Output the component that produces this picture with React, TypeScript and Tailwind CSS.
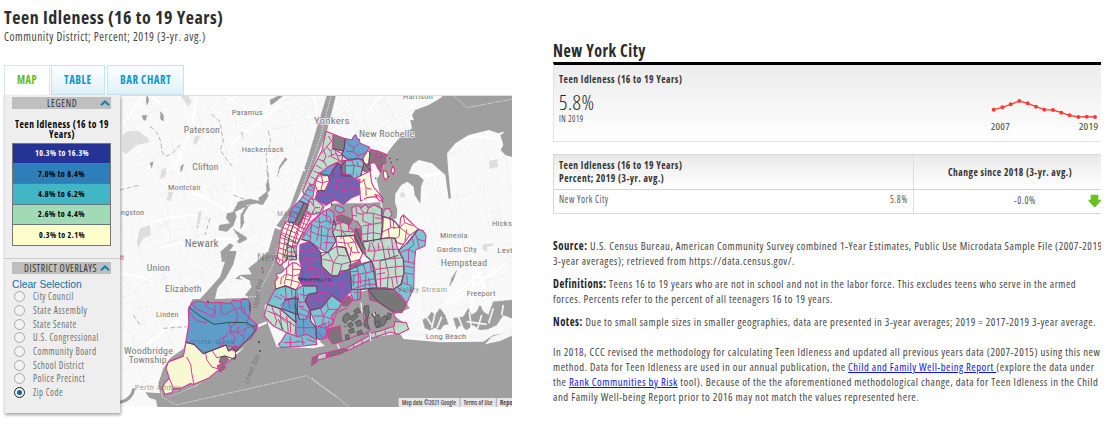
import React, { useLayoutEffect, useRef } from "react";

/* One line of text, condensed horizontally to the width of its box. */
function Fit({ className = "", children }: { className?: string; children: React.ReactNode }) {
  const box = useRef<HTMLSpanElement>(null);
  const inner = useRef<HTMLSpanElement>(null);
  useLayoutEffect(() => {
    if (!box.current || !inner.current) return;
    const k = box.current.clientWidth / inner.current.offsetWidth;
    inner.current.style.transform = `scaleX(${k})`;
  }, []);
  return (
    <span ref={box} className={"block shrink-0 whitespace-nowrap " + className}>
      <span ref={inner} className="inline-block origin-left">{children}</span>
    </span>
  );
}

const NAVY = "#5f5caf", BLUE = "#5a9dcb", TEAL = "#6cc5d1", GREEN = "#b5dfc5", YELLOW = "#ffffd6", GRAY = "#747474";

const districts: [string, string][] = [
  [GREEN, "198,16 220,25 218,68 250,85 245,105 225,112 205,122 198,135 178,142 165,165 150,200 135,210 128,196 150,145 172,100 185,75"],
  [GRAY, "220,25 256,38 250,75 218,68"],
  [BLUE, "256,38 276,42 280,32 287,26 292,38 298,40 300,52 329,64 322,75 320,90 308,102 296,98 270,104 262,100 245,85 252,70"],
  [YELLOW, "322,75 330,78 326,118 312,112 308,98"],
  [GRAY, "330,70 354,75 382,86 376,97 378,110 368,118 362,140 352,124 345,110 328,112"],
  [GRAY, "310,118 330,112 332,134 316,138 305,130"],
  [TEAL, "255,103 270,104 296,98 312,112 308,126 302,150 284,158 270,148 256,144"],
  [GRAY, "244,104 256,103 256,145 246,150 240,128"],
  [YELLOW, "316,142 330,135 335,170 342,185 355,200 370,218 362,222 345,212 320,215 302,225 298,180 300,160 285,158"],
  [NAVY, "235,110 245,125 246,150 256,144 272,150 285,160 298,165 300,205 275,215 250,235 225,222 198,238 165,220 172,195 195,193 205,175 210,150 218,130"],
  [BLUE, "178,142 205,122 235,110 218,130 210,150 185,147"],
  [YELLOW, "174,150 205,148 208,165 195,193 172,195 165,175"],
  [TEAL, "165,177 150,175 132,207 118,225 142,237 148,222 158,218"],
  [BLUE, "95,248 118,225 132,230 105,290 83,288"],
  [GRAY, "132,230 144,237 115,300 103,290"],
  [GREEN, "144,237 150,218 170,222 190,240 180,260 155,265 140,258"],
  [YELLOW, "83,285 75,290 62,325 57,362 48,405 60,418 78,405 82,390 106,388 107,366 122,335 128,318 153,270 140,258 115,300"],
  [GREEN, "82,365 108,358 110,400 82,402"],
  [YELLOW, "80,424 98,410 110,412 125,425 128,458 118,475 108,492 75,478 60,495 47,487 45,466 54,455 48,445 64,440"],
  [TEAL, "205,248 222,260 222,282 228,300 218,320 228,345 205,380 180,368 150,347 125,340 138,310 150,290 178,265"],
  [NAVY, "120,356 150,347 168,362 182,380 185,420 215,450 265,432 272,455 275,492 245,528 215,510 185,545 150,552 135,525 145,505 172,500 170,480 128,480 115,458 125,425 118,400"],
  [GREEN, "218,298 258,286 268,305 283,318 284,335 228,345 218,320"],
  [YELLOW, "228,332 284,328 308,382 300,400 272,408 258,365 230,362"],
  [GREEN, "185,390 230,360 255,365 272,408 270,432 240,436 234,450 213,448 185,420"],
  [TEAL, "228,238 250,245 253,256 238,262 224,250"],
  [GRAY, "228,272 245,266 276,280 270,296 253,291 244,285 232,286"],
  [GRAY, "286,308 300,310 303,345 317,372 318,390 303,372 283,338"],
  [GREEN, "275,245 292,238 304,245 318,235 325,247 342,236 365,248 367,300 362,345 340,350 305,342 304,305 292,287 278,282"],
  [GREEN, "373,250 388,247 396,265 388,276 368,272"],
  [YELLOW, "370,272 390,276 405,288 419,305 422,275 430,267 475,310 447,330 430,355 410,350 405,336 363,346 368,310"],
  [TEAL, "475,310 489,314 498,328 495,360 467,372 463,410 461,487 440,532 424,510 400,490 425,475 432,440 430,400 415,375 440,352"],
  [GREEN, "308,348 385,335 405,337 410,360 430,400 432,440 423,475 400,490 350,485 345,430 335,405 318,390"],
  [TEAL, "265,430 285,418 335,405 343,430 350,485 325,488 302,490 300,520 280,523 272,500 276,465"],
  [GRAY, "325,490 375,485 404,492 440,535 425,560 400,558 355,528 330,522"],
  [GRAY, "266,420 300,403 303,412 284,422"],
  [TEAL, "215,508 244,530 238,545 215,570 220,590 205,600 200,635 175,640 165,590 150,555 185,545"],
  [GRAY, "266,510 277,524 262,540 246,538 248,525"],
  [BLUE, "105,535 118,530 150,552 152,585 168,605 170,640 110,635 105,590"],
  [TEAL, "45,490 75,480 108,492 125,480 170,480 172,500 145,505 135,525 150,552 138,580 118,580 105,535 108,590 60,548 22,535"],
  [BLUE, "75,522 112,516 112,566 65,548"],
  [GREEN, "22,535 60,548 108,590 105,630 80,620 40,600 12,570"],
  [TEAL, "55,655 64,646 80,620 112,632 140,625 168,640 170,655 130,660 64,665"],
  [BLUE, "168,600 198,606 200,635 180,642 168,630"],
  [GRAY, "205,610 240,600 245,646 218,654 205,635"],
  [GRAY, "157,695 173,688 170,708 155,718"],
  [GREEN, "175,686 200,680 198,696 170,703"],
  [GRAY, "204,680 252,667 263,673 240,684 200,694"],
  [GREEN, "262,665 330,628 332,640 290,661 262,674"],
  [GREEN, "330,622 360,615 403,600 404,586 439,590 446,610 415,625 392,618 334,637"],
];

const zipLines = [
  "205,30 215,45 200,62 210,75", "200,62 185,82", "190,70 198,92 188,110", "213,70 215,92 240,105", "175,100 192,105 200,122", "168,118 186,128", "160,135 178,142", "152,152 168,160", "145,170 158,180", "205,92 230,82", "225,75 238,104",
  "262,52 282,66 297,53", "282,66 280,78 294,88 292,98", "258,75 280,78", "294,88 320,80", "262,100 250,90 232,88",
  "275,104 282,118 279,148", "256,120 282,118 307,124", "290,106 296,122",
  "215,140 228,162 245,165 270,158", "210,180 228,162 230,188 250,195 275,190 298,185", "230,188 218,205 225,222", "250,195 255,220", "275,190 280,205", "195,193 205,215 198,238", "210,150 225,142 240,145", "172,205 200,208", "250,165 256,192", "225,115 228,140", "265,160 270,180 300,190",
  "185,150 188,170 207,165", "188,170 183,192", "170,165 186,170", "310,160 318,185 335,190", "318,185 318,210", "300,170 316,160",
  "340,80 352,96 376,90", "350,80 348,96 338,102", "352,96 366,110 360,128", "345,100 362,104", "365,85 362,100",
  "126,212 150,228", "135,205 156,214", "143,190 162,196", "150,178 163,190", "105,240 128,250", "96,255 118,265", "90,270 112,278", "150,225 165,245 180,245", "165,245 155,265", "160,220 160,240",
  "75,292 112,308", "70,305 118,326", "65,320 116,340", "62,334 110,353", "60,350 106,366", "56,365 84,375", "54,380 82,390", "50,395 72,406", "90,288 76,330 70,372 68,410", "101,293 88,332 82,368", "117,298 101,340 96,366", "129,278 113,318 104,355", "140,262 125,312", "120,288 145,298", "115,300 140,312", "110,311 135,322", "128,276 151,282", "134,268 153,275", "82,378 108,378", "94,365 96,402", "82,390 110,392", "87,405 84,424", "52,388 60,410",
  "64,455 80,444 98,450 125,444", "80,424 80,444 72,475", "98,412 98,450 92,482", "64,455 62,475", "98,430 126,430", "78,460 92,462 118,470",
  "150,292 170,305 188,300 205,310 220,305", "160,282 180,290 200,285 222,290", "175,268 180,290 170,345", "200,250 200,285", "205,310 198,370", "150,315 170,325 195,330 225,332", "155,295 150,345", "185,300 184,330 182,368", "140,325 155,335", "190,350 220,350", "187,265 210,272", "212,275 210,295",
  "120,375 145,370 170,378", "118,395 150,398 184,400", "145,370 150,398 145,425 180,430", "125,425 145,425 148,450 190,455 215,450", "148,450 150,480", "170,435 165,480", "185,420 190,455 195,480 215,478 245,470 270,460", "195,480 185,510", "215,478 216,510", "172,500 200,500 215,510", "245,470 250,500 240,525", "235,450 245,470", "120,470 175,468 205,455", "160,350 155,372", "165,372 168,395", "120,410 148,412", "160,400 158,430", "215,450 210,480", "145,515 180,525 210,512", "175,500 172,545", "155,520 152,550", "192,525 196,540",
  "240,292 245,315 280,318", "222,310 245,315 243,340", "265,290 266,318", "245,315 258,326", "250,332 256,362", "232,348 262,352 290,346", "270,330 285,350 295,380", "262,352 278,380 300,380", "275,362 270,390",
  "205,380 220,410 215,448", "220,410 245,415 270,408", "230,362 235,388 220,410", "235,388 260,390", "245,415 240,436", "190,400 215,405",
  "300,245 310,260 340,262 365,270", "310,260 308,285 335,295 365,290", "340,262 340,350", "308,300 335,295", "305,325 340,320 364,325", "288,240 290,262 310,265", "278,268 292,270", "325,247 320,265", "325,295 322,345", "345,275 362,278",
  "390,276 392,305 368,318", "392,305 420,305 450,328", "419,305 418,330 407,338", "385,308 388,335", "430,268 434,290 460,300", "434,290 420,305", "400,285 402,310", "440,310 435,345",
  "465,320 472,340 495,345", "455,330 462,356 445,370", "472,340 478,368", "420,380 445,370 465,380", "430,405 462,412", "432,440 460,445", "445,370 446,410", "428,470 455,480 450,500", "440,445 442,475", "412,485 440,500", "435,420 460,425",
  "335,350 345,375 340,405", "365,345 370,370 375,400 385,440 382,487", "320,375 345,375 370,370 415,370", "340,405 375,400 425,395", "348,430 385,425 430,420", "352,460 385,455 428,450", "395,338 398,368 405,398 408,430", "355,350 355,370", "384,370 390,395", "360,405 362,485", "405,430 412,475", "330,350 325,375", "350,445 375,440", "395,455 400,485",
  "272,450 345,435", "280,470 348,458", "290,420 296,445 292,520", "310,415 318,440 315,488", "276,490 320,475 348,475", "330,408 334,435", "300,448 302,475", "270,438 296,435", "282,448 280,480", "280,500 300,498", "326,455 330,485",
  "180,545 190,570 215,580", "160,570 190,570 188,600", "200,525 205,550 235,550", "190,570 205,550", "175,600 200,590", "195,590 200,605 208,598 206,585",
  "60,505 80,520 112,510", "75,480 80,520 60,540", "112,500 118,530 150,525", "130,485 132,520", "45,510 66,520", "95,490 96,512", "120,545 150,560", "120,505 145,510", "108,560 150,575", "110,605 165,605", "130,575 132,625", "84,521 90,548", "110,540 132,542",
  "35,540 50,585 45,600", "22,555 60,570 105,600", "60,548 65,610", "80,570 85,620", "45,560 80,590", "90,585 92,620", "90,632 92,662", "125,632 130,658", "72,650 115,648", "140,640 166,648", "110,645 135,650",
  "280,655 282,666", "305,642 307,654", "345,620 350,635", "375,613 378,628", "400,602 405,624", "328,628 330,640",
];

const darkLines = [
  "256,38 252,70 245,85 262,100 296,98 308,102", "308,98 312,112 302,150", "308,102 318,118 332,134", "218,68 250,75", "210,150 235,110 245,125 246,150 272,150", "178,142 205,148 210,165", "172,195 195,193", "240,128 256,103", "132,230 144,237 115,300", "103,290 83,288", "118,225 132,230 105,290",
  "218,298 222,282 228,300 218,320 228,345 205,380 182,380 150,347 125,340", "230,362 255,365 272,408 270,432", "228,332 284,328 308,382", "286,308 303,345 317,372", "308,348 385,335 405,337 410,350", "365,270 405,285 420,305", "182,380 185,420 215,450 234,450 240,436 265,432 335,405", "318,390 335,405 350,485", "270,432 275,492 302,490 325,488 400,490", "430,355 415,375 430,400 432,440 423,475 400,490", "440,355 475,310", "128,480 170,480 172,500 145,505 135,525 150,552 185,545 215,508 245,530", "105,535 108,590 60,548 22,535", "45,490 75,480 108,492 105,535 118,580", "150,552 152,585 168,605 170,640", "78,405 82,390 110,392", "101,293 88,332 72,395", "63,325 112,352 125,325", "330,78 326,118", "115,458 145,462 168,458 185,464", "340,485 325,490 355,528 400,558", "72,522 112,516 112,566 65,548", "360,405 415,388", "55,580 70,612", "75,350 100,365 110,398", "365,248 367,300 362,345",
];

const siDistricts: [string, string][] = [
  [BLUE, "205,178 215,155 235,150 260,156 302,154 330,158 340,147 362,150 370,143 387,147 391,175 388,200 412,222 408,238 392,262 350,292 318,282 250,308 222,280 198,274 207,215"],
  [YELLOW, "198,274 222,280 250,308 318,282 326,300 347,290 346,318 330,328 268,380 222,400 210,398 183,412 160,412 156,425 134,430 127,410 135,395 148,382 138,352 145,333 190,316"],
  [GRAY, "302,318 315,315 326,326 312,340 298,334"],
  [GRAY, "345,284 357,290 348,302 338,297"],
  [GRAY, "401,224 412,224 410,236 401,239"],
  [GRAY, "292,345 308,336 316,350 300,363"],
];
const siLines = [
  "215,155 230,175 255,185 280,198", "255,157 262,170 282,178 282,198", "302,154 304,188 318,190 345,172 335,158", "285,162 286,190", "362,150 365,180 388,200 376,190", "345,172 352,190 350,215 335,225 330,240 345,260 340,280", "328,215 332,240 312,260 306,286", "356,225 350,245 372,256 368,275", "300,288 298,265 320,255", "388,200 380,212 384,225", "330,240 352,245 370,235",
  "200,318 212,340 215,365 222,400", "256,300 260,325 275,348 300,355", "276,298 290,320 300,318", "148,382 160,412", "140,340 150,330 188,316", "400,225 376,232 372,250", "210,165 205,178 230,210 260,215", "350,172 372,170 376,190",
];

const water = [
  // Hudson
  "648,0 621,0 590,100 560,200 510,335 465,398 442,480 450,520 480,500 490,395 530,318 575,225 620,112",
  // Long Island Sound and East River
  "1176,0 971,0 961,10 926,30 886,45 876,60 882,76 871,75 876,100 846,120 820,150 803,172 795,205 770,255 786,320 740,325 640,325 612,358 618,400 690,470 760,400 830,370 832,345 825,322 826,296 844,270 862,260 881,275 884,300 901,326 903,275 911,255 895,240 866,235 878,208 896,195 936,205 976,240 986,312 993,310 984,220 981,175 1006,145 1046,120 1106,105 1136,115 1148,110 1160,118 1176,110",
  // Newark Bay and the Kills
  "322,468 350,468 340,508 318,548 292,580 285,612 388,608 400,635 420,640 422,690 380,752 320,790 290,840 220,875 150,905 120,895 115,865 130,820 150,790 192,760 205,690 205,640 218,612 240,612 262,588 300,545 315,500",
  // Upper bay
  "442,470 478,480 485,500 500,540 470,610 435,630 430,680 425,700 380,695 385,606 375,600 395,575 386,555 345,552 360,540 395,538 385,520 410,500",
  // Lower bay and ocean
  "76,892 125,895 150,905 230,872 300,825 370,760 415,700 435,640 445,690 470,755 580,760 700,735 840,715 850,732 960,742 1090,740 1120,720 1176,712 1176,937 112,937 108,915 88,908",
  // Jamaica Bay
  "630,660 690,600 760,580 840,600 870,640 820,660 860,690 740,740 640,775 600,740",
  "1141,120 1155,112 1176,110 1176,186 1156,180 1142,165 1150,150",
  "321,355 345,350 350,365 340,392 320,410 295,406 298,390 330,385 318,370",
  "8,120 25,108 55,108 84,130 88,142 50,150 18,178 8,170",
];

const marsh = [
  "90,205 100,200 95,220", "338,353 355,320 390,312 420,318 415,310 440,290 445,303 428,330 410,325 380,330 362,360 362,402 372,385 370,360 388,330",
  "66,62 80,60 78,76 70,74", "121,50 130,60 131,77 122,74", "450,15 470,5 480,0 492,0 465,22 452,30", "478,215 495,188 502,192 480,220 472,245", "440,225 446,245 438,270 441,295 450,285", "182,216 190,206 189,218 182,232", "78,8 84,3 86,20 80,30", "302,470 330,445 340,452 320,478 316,500 306,500", "340,402 376,425 382,432 358,445 352,440 358,430",
  "908,675 925,665 935,650 945,660 960,640 975,660 985,688 972,690 960,705 945,698 930,706 915,700", "1000,670 1030,665 1045,640 1055,660 1070,650 1080,630 1090,650 1105,660 1120,620 1176,615 1176,670 1150,660 1130,690 1105,702 1080,705 1060,690 1040,705 1020,690 1010,702",
  "995,550 1010,526 1000,555 988,575", "1090,670 1105,665 1115,685 1100,700",
];

const islands = [
  "250,570 262,560 275,572 285,562 295,570 280,585 268,578 256,592 248,585", "262,595 275,588 280,598 270,606", "265,612 280,606 283,618 270,622", "280,555 295,545 302,560 290,562", "285,588 300,582 305,598 292,602", "256,628 266,625 268,640 258,642", "290,618 304,612 308,622 296,628",
  "344,570 356,565 360,580 375,568 384,575 372,598 350,605 344,590", "312,540 325,538 328,560 322,580 326,610 312,600 318,575", "335,565 345,558 348,565 338,572", "384,560 394,566 392,578 380,582", "344,588 358,586 360,602 348,604",
];

function makeRoads() {
  let s = 91;
  const r = () => ((s = (s * 16807) % 2147483647) / 2147483647);
  const minor: string[] = [], major: string[] = [];
  for (let i = 0; i < 620; i++) {
    const x = r() * 1176, y = r() * 936, a = (r() > 0.5 ? 1.15 : -0.4) + (r() - 0.5) * 0.5, l = 25 + r() * 60;
    minor.push(`M${x.toFixed(0)} ${y.toFixed(0)}l${(Math.cos(a) * l).toFixed(0)} ${(Math.sin(a) * l).toFixed(0)}`);
  }
  for (let i = 0; i < 44; i++) {
    const x = r() * 1176, y = r() * 936, a = r() * 6.28, l = 120 + r() * 160;
    const dx = Math.cos(a) * l, dy = Math.sin(a) * l;
    major.push(`M${x.toFixed(0)} ${y.toFixed(0)}q${(dx / 2 + 25).toFixed(0)} ${(dy / 2 - 20).toFixed(0)} ${dx.toFixed(0)} ${dy.toFixed(0)}`);
  }
  return [minor.join(""), major.join("")];
}
const [minorRoads, majorRoads] = makeRoads();

const towns: [string, number, number, number, number][] = [
  ["Paramus", 335, 59, 24, 94], ["Paterson", 191, 115, 27, 109], ["Hackensack", 365, 172, 24, 127], ["Clifton", 217, 224, 27, 79],
  ["Montclair", 144, 284, 24, 99], ["ngston", 2, 360, 24, 71], ["Newark", 194, 456, 30, 102], ["Yonkers", 582, 87, 29, 107],
  ["New Rochelle", 717, 125, 27, 166], ["Harrison", 849, 11, 22, 90], ["Hicks", 1116, 392, 23, 60], ["Mineola", 960, 429, 23, 83],
  ["Garden City", 950, 472, 24, 121], ["Levi", 1132, 474, 24, 46], ["Hempstead", 962, 513, 27, 140],
  ["Freeport", 1040, 602, 24, 87], ["Long Beach", 917, 733, 24, 122], ["Union", 80, 528, 27, 70], ["Elizabeth", 135, 592, 27, 110],
  ["Linden", 108, 667, 24, 68], ["Woodbridge", 12, 777, 27, 147], ["Township", 26, 804, 27, 114],
  ["it", 0, 494, 22, 12],
];
/* Labels that run on under the translucent districts. */
const coveredTowns: [string, number, number, number, number][] = [
  ["Valley Stream", 832, 590, 24, 150], ["Perth Amboy", 44, 886, 23, 140], ["MANHATTAN", 471, 364, 19, 130], ["New York", 411, 497, 30, 142],
];

function CityMap() {
  return (
    <svg className="block h-[312px] w-[392px]" viewBox="0 0 1176 936" preserveAspectRatio="none">
      <rect width="1176" height="936" fill="#f9f9f9" />
      <path d={minorRoads} stroke="#f2f2f2" strokeWidth="3" fill="none" />
      <path d={majorRoads} stroke="#fff" strokeWidth="6" fill="none" />
      <path d="M90 95Q120 110 125 160T180 150M275 58L300 80 310 140 300 165 325 200 338 215M445 108L452 140 438 180 445 240M240 350L232 400M270 370L255 420M340 300L390 320M0 285L60 270M40 660L60 690M130 700L200 695" stroke="#b5b5b5" strokeWidth="3" strokeDasharray="14 7" fill="none" />
      <g fill="#dedede">
        <path d="M222 125L240 122 232 145 220 150ZM125 225L140 215 135 245 120 252ZM145 290L160 292 152 318 140 315ZM60 400L90 390 92 420 70 430 55 458 50 440ZM1108 198L1132 192 1134 215 1108 222ZM840 294L852 292 856 305 842 308ZM1088 448L1120 445 1120 452 1100 455 1103 470 1088 465ZM180 0L205 2 215 20 205 35ZM235 352L245 345 240 385 230 390ZM360 110L372 112 368 135Z" />
      </g>
      <g fill="#9f9f9f">
        {water.slice(0, 8).map((p, i) => <polygon key={i} points={p} />)}
        {marsh.map((p, i) => <polygon key={i} points={p} stroke="#9f9f9f" strokeWidth="1.5" strokeDasharray="9 5" />)}
      </g>
      <polygon points={water[8]} fill="#dedede" />
      <path d="M915 660l20 30M945 655l-10 45M965 665l-14 35M1015 665l15 38M1048 650l6 48M1085 660l-12 40M1120 640l-14 45M1150 630l-5 30M1040 680l60 8" stroke="#f5f5f5" strokeWidth="5" />
      <path d="M840 720L850 708 950 716 1095 718 1085 731 960 730Z M1095 748L1115 725 1176 705 1176 722 1140 738Z" fill="#f5f5f5" />
      <path d="M262 525L290 545M345 560L388 578M290 515L300 530M360 545L390 562M410 695L440 682M570 322L545 350M555 226L545 222M465 395L482 402" stroke="#f8f8f8" strokeWidth="7" />
      <path d="M0 922Q35 915 42 880" stroke="#9f9f9f" strokeWidth="9" fill="none" />
      <path d="M634 0L600 130 520 350 480 440 455 520 408 605H365M125 890V905L168 930 560 842 650 905 690 940M1000 0L1042 38 1176 12M576 850L652 908" stroke="#e9e9e9" strokeWidth="3" strokeDasharray="4 4" fill="none" />
      <g fill="#777" fontFamily="Roboto, sans-serif">
        <text x="412" y="640" fontSize="21" fill="#7c7c7c" transform="rotate(-80 412 640)">Upper Bay</text>
        <text x="384" y="868" fontSize="22" fill="#808080" transform="rotate(-68 384 868)">Lower Bay</text>
        {towns.map(([t, x, y, s, w]) => (
          <text key={t} x={x} y={y} fontSize={s} textLength={w} lengthAdjust="spacingAndGlyphs" stroke="#fafafa" strokeWidth="4" paintOrder="stroke">{t}</text>
        ))}
      </g>
      <g fillOpacity="0.93">
        <g transform="translate(420 93)" strokeLinejoin="round">
          <g stroke="#d83a98" strokeWidth="3.4">
            {districts.map(([c, p], i) => <polygon key={i} points={p} fill={c} />)}
            <path d="M398 120l6 10-4 16-7-10zM370 134l10 2 4 18-8 8-6-12zM345 205l14 6 10 16-12-4z" fill={YELLOW} />
          </g>
          <g fill="none" stroke="#d83a98" strokeWidth="3">
            {zipLines.map((p, i) => <polyline key={i} points={p} />)}
            <path d="M126 328L150 296 185 262 193 240M130 334L155 300M300 560L310 545 312 585 330 575M306 590L325 598 332 612 318 620M338 560L350 600 380 590M180 605q10-15 18 0t8 20l-20 10-10-18M345 490L350 478M300 520L303 490M390 565L400 560 408 580M225 625L215 600 230 560 262 545M245 646L300 625 330 622" />
            <path d="M5 425l4 4M8 437l4 3" strokeWidth="6" />
          </g>
          <g fill="none" stroke="#35504d" strokeWidth="2.5">
            {darkLines.map((p, i) => <polyline key={i} points={p} />)}
          </g>
          <g fill="#737373" stroke="#4a4a4a" strokeWidth="2">
            {islands.map((p, i) => <polygon key={i} points={p} />)}
            <path d="M388 96l3 3M392 108l3 3M346 155l3 3M385 150l2 3M214 232l3 8M410 100l3 2M255 600l2 3" strokeWidth="4" />
          </g>
          <path d="M303 530L306 560M330 620L332 645M232 655L238 668M362 228L366 245M307 214L315 232M345 570L340 560" stroke="#eee" strokeWidth="4" />
          <g fontFamily="Roboto, sans-serif" fontSize="18" fillOpacity="0.35" fill="#1e3a5f">
            <text x="216" y="152" textLength="80">BRONX</text>
            <text x="325" y="373" textLength="80">QUEENS</text>
            <text x="120" y="467" textLength="95" fillOpacity="0.7" fill="#23246e">BROOKLYN</text>
          </g>
        </g>
        <g transform="translate(0 468)" strokeLinejoin="round">
          <g stroke="#d83a98" strokeWidth="3.4">
            {siDistricts.map(([c, p], i) => <polygon key={i} points={p} fill={c} />)}
          </g>
          <g fill="none" stroke="#d83a98" strokeWidth="3">
            {siLines.map((p, i) => <polyline key={i} points={p} />)}
          </g>
          <path d="M205 168L240 195 282 220 332 214 380 215 401 228M198 274L222 280 250 308 318 282 326 300 338 290 348 302 385 262 408 238M302 318L315 315 345 325 348 310M390 155V180" fill="none" stroke="#35504d" strokeWidth="3" />
          <path d="M417 270v6M420 297v5M262 150l4 4" stroke="#333" strokeWidth="4" />
          <text x="212" y="279" fontSize="17" textLength="130" fontFamily="Roboto, sans-serif" fill="#2a5d88" fillOpacity="0.6">STATEN ISLAND</text>
        </g>
      </g>
      <g fill="#666" fillOpacity="0.6" fontFamily="Roboto, sans-serif">
        {coveredTowns.map(([t, x, y, s, w]) => (
          <text key={t} x={x} y={y} fontSize={s} textLength={w} lengthAdjust="spacingAndGlyphs">{t}</text>
        ))}
      </g>
      <g fontFamily="'Open Sans', sans-serif" fontSize="19" fill="#333" stroke="#333" strokeWidth="0.3">
        <rect x="836" y="909" width="340" height="27" fill="#e6e6e6" stroke="none" />
        <path d="M1020 909V936M1129 909V936" stroke="#aaa" strokeWidth="3" />
        <text x="846" y="929" textLength="162" lengthAdjust="spacingAndGlyphs">Map data ©2021 Google</text>
        <text x="1031" y="929" textLength="87" lengthAdjust="spacingAndGlyphs">Terms of Use</text>
        <text x="1140" y="929" textLength="38" lengthAdjust="spacingAndGlyphs" fontWeight="600">Repo</text>
      </g>
      <path d="M0 1.5H1176" stroke="#dedede" strokeWidth="3" />
    </svg>
  );
}

function Caret() {
  return (
    <svg className="h-[6px] w-[10px]" viewBox="0 0 10 6"><path d="M1 5.2L5 1.4 9 5.2" stroke="#1783b0" strokeWidth="2.1" fill="none" /></svg>
  );
}

const legend = [
  { label: "10.3% to 16.3%", row: "bg-[#253494] text-white", w: "w-[54px]" },
  { label: "7.0% to 8.4%", row: "bg-[#2c7fb8] text-black", w: "w-[47px]" },
  { label: "4.8% to 6.2%", row: "bg-[#41b6c4] text-black", w: "w-[47px]" },
  { label: "2.6% to 4.4%", row: "bg-[#a1dab4] text-black", w: "w-[47px]" },
  { label: "0.3% to 2.1%", row: "bg-[#ffffcc] text-black", w: "w-[46px]" },
];

const overlays = [
  { label: "City Council", w: "w-[41px]" },
  { label: "State Assembly", w: "w-[54px]" },
  { label: "State Senate", w: "w-[44px]" },
  { label: "U.S. Congressional", w: "w-[66px]" },
  { label: "Community Board", w: "w-[64px]" },
  { label: "School District", w: "w-[51px]" },
  { label: "Police Precinct", w: "w-[52px]" },
  { label: "Zip Code", w: "w-[30px]", on: true },
];

function Sidebar() {
  return (
    <aside className="z-10 h-[318px] w-[116px] shrink-0 border-l border-[#ddd] bg-[#eee] shadow-[1px_2px_3px_rgba(0,0,0,0.35)]">
      <div className="h-[164px] border-b border-[#ccc] pl-[7px] pt-[2px]">
        <div className="flex h-3 w-[99px] items-center justify-between bg-[#bfbfbf] pl-[35px] pr-[1px] text-[10px] text-[#333]">
          <Fit className="w-[30px]">LEGEND</Fit>
          <Caret />
        </div>
        <div className="flex w-[99px] flex-col items-center pt-[10px] text-[11px] font-bold leading-[10px] text-black">
          <Fit className="h-[10px] w-[94px]">Teen Idleness (16 to 19</Fit>
          <Fit className="h-[10px] w-[26px]">Years)</Fit>
        </div>
        <div className="mt-[4px] w-[99px] border border-[#777]">
          {legend.map((l, i) => (
            <div key={l.label} className={"flex items-center justify-center text-[9.5px] font-bold " + (i < 4 ? "h-[20.2px] border-b border-[#66777a] " : "h-[20px] ") + l.row}>
              <Fit className={l.w}>{l.label}</Fit>
            </div>
          ))}
        </div>
      </div>
      <div className="pl-[7px] pt-[3px]">
        <div className="flex h-3 w-[99px] items-center justify-between bg-[#bfbfbf] pl-[12px] pr-[1px] text-[10px] text-[#333]">
          <Fit className="w-[73px]">DISTRICT OVERLAYS</Fit>
          <Caret />
        </div>
        <div className="mt-[4px] h-[12px] font-['Liberation_Sans',sans-serif] text-[11px] leading-[13px] tracking-normal text-[#0d72ac]">
          <Fit className="w-[70px] [font-stretch:normal]">Clear Selection</Fit>
        </div>
        {overlays.map((o) => (
          <div key={o.label} className="flex h-[13.7px] items-center gap-[8px] pl-[2px] text-[10px] text-[#707070]">
            <span className={"flex size-[11px] items-center justify-center rounded-full border bg-[#f3f3f3] " + (o.on ? "border-[1.5px] border-[#222]" : "border-[#a8a8a8]")}>
              {o.on && <span className="size-[5px] rounded-full bg-[#0b6a94]" />}
            </span>
            <Fit className={o.w}>{o.label}</Fit>
          </div>
        ))}
      </div>
    </aside>
  );
}

const trend = [[506, 224], [532, 217], [557, 208], [583, 198], [608, 205], [633, 215], [658, 224], [684, 225], [709, 233], [734, 241], [760, 246], [785, 245], [810, 246]];

function Trend() {
  return (
    <svg className="block h-[42px] w-[114px]" viewBox="486 180 342 126">
      <polyline points={trend.map((p) => p.join(",")).join(" ")} fill="none" stroke="#ff4238" strokeWidth="4" />
      {trend.map(([x, y]) => <circle key={x} cx={x} cy={y} r="6" fill="#fb3a30" />)}
      <g fontFamily="'Open Sans', sans-serif" fontSize="26" fill="#444">
        <text x="497" y="286" textLength="58" lengthAdjust="spacingAndGlyphs">2007</text>
        <text x="761" y="286" textLength="59" lengthAdjust="spacingAndGlyphs">2019</text>
      </g>
    </svg>
  );
}

function Report() {
  return (
    <main className="w-[548px] overflow-hidden pt-[41px] text-[#444]">
      <div className="h-[21px] text-[17px] font-bold leading-[20px] text-[#2b2b2b]"><Fit className="w-[93px]">New York City</Fit></div>
      <section className="flex h-[80px] justify-between border-b border-l border-t-[3px] border-b-[#e2e2e2] border-l-[#e2e2e2] border-t-black bg-linear-to-b from-[#ececec] to-white">
        <div className="pl-[5px] pt-[7px]">
          <div className="h-[14px] text-[11px] font-bold leading-[14px] text-[#333]"><Fit className="w-[123px]">Teen Idleness (16 to 19 Years)</Fit></div>
          <div className="mt-[5px] h-[23px] text-[20px] font-light leading-[24px] text-[#222]"><Fit className="w-[36px]">5.8%</Fit></div>
          <div className="h-[10px] text-[8.5px] leading-[10px]"><Fit className="w-[25px]">IN 2019</Fit></div>
        </div>
        <div className="pt-[30px]"><Trend /></div>
      </section>
      <section className="mt-[12px] border-y border-l border-[#d9d9d9]">
        <div className="flex h-[35px] border-b border-[#d5d5d5] bg-linear-to-b from-[#e9e9e9] to-white text-[11px] font-bold leading-[13px] text-[#333]">
          <div className="w-[360px] border-r border-[#ddd] pl-[5px] pt-[3px]">
            <Fit className="w-[123px]">Teen Idleness (16 to 19 Years)</Fit>
            <Fit className="w-[105px]">Percent; 2019 (3-yr. avg.)</Fit>
          </div>
          <div className="flex flex-1 items-center pb-[2px] pl-[34px]"><Fit className="w-[124px]">Change since 2018 (3-yr. avg.)</Fit></div>
        </div>
        <div className="flex h-[23px] text-[10px] leading-[13px] text-[#555]">
          <div className="flex w-[360px] justify-between border-r border-[#ddd] pl-[5px] pr-[5px] pt-[3px]">
            <Fit className="w-[50px]">New York City</Fit>
            <Fit className="w-[18px]">5.8%</Fit>
          </div>
          <div className="flex flex-1 items-center justify-between pb-[2px] pl-[100px]">
            <Fit className="w-[22px]">-0.0%</Fit>
            <svg className="h-[14px] w-[13px]" viewBox="0 0 39 42"><path d="M10 2H29Q31 2 31 4V17H38Q40 19 38 22L22 39Q20 41 18 39L2 22Q0 19 3 17H8V4Q8 2 10 2Z" fill="#6cc024" /></svg>
          </div>
        </div>
      </section>
      <article className="mt-[24px] text-[11.5px] leading-[15px]">
        <Fit className="w-[550px]"><b className="text-[#222]">Source:</b> U.S. Census Bureau, American Community Survey combined 1-Year Estimates, Public Use Microdata Sample File (2007-2019</Fit>
        <Fit className="w-[242px]">3-year averages); retrieved from https://data.census.gov/.</Fit>
        <Fit className="mt-[8px] w-[523px]"><b className="text-[#222]">Definitions:</b> Teens 16 to 19 years who are not in school and not in the labor force. This excludes teens who serve in the armed</Fit>
        <Fit className="w-[280px]">forces. Percents refer to the percent of all teenagers 16 to 19 years.</Fit>
        <Fit className="mt-[8px] w-[543px]"><b className="text-[#222]">Notes:</b> Due to small sample sizes in smaller geographies, data are presented in 3-year averages; 2019 = 2017-2019 3-year average.</Fit>
        <Fit className="mt-[15px] w-[547px]">In 2018, CCC revised the methodology for calculating Teen Idleness and updated all previous years data (2007-2015) using this new</Fit>
        <Fit className="w-[541px]">method. Data for Teen Idleness are used in our annual publication, the <a className="text-[#1010ee] underline">Child and Family Well-being Report </a>(explore the data under</Fit>
        <Fit className="w-[545px]">the <a className="text-[#1010ee] underline">Rank Communities by Risk</a> tool). Because of the the aforementioned methodological change, data for Teen Idleness in the Child</Fit>
        <Fit className="w-[366px]">and Family Well-being Report prior to 2016 may not match the values represented here.</Fit>
      </article>
    </main>
  );
}

export default function App() {
  return (
    <div className="flex h-[431px] w-[1105px] overflow-hidden bg-white pl-1 font-['Open_Sans','Noto_Sans',sans-serif] tracking-[0.035em] [font-stretch:75%]">
      <div className="w-[549px] shrink-0 pt-[6px]">
        <h1 className="h-[22px] text-[18.5px] font-bold leading-[22px] text-[#2d2d2d]"><Fit className="w-[219px]">Teen Idleness (16 to 19 Years)</Fit></h1>
        <div className="mt-[1px] h-4 text-[12.5px] leading-4 text-[#444]"><Fit className="w-[202px]">Community District; Percent; 2019 (3-yr. avg.)</Fit></div>
        <nav className="mt-[20px] flex h-[30px] gap-[1.5px] text-[12px] font-bold text-[#0c9ac8]">
          <div className="flex w-[45.5px] items-center justify-center border border-b-0 border-[#cfe9f2] bg-white pb-px text-[#63bb1d]"><Fit className="w-[20px]">MAP</Fit></div>
          <div className="flex w-[54px] items-center justify-center border border-[#c3e5f0] bg-linear-to-b from-white to-[#def1f8] pb-px"><Fit className="w-[28px]">TABLE</Fit></div>
          <div className="flex w-[77px] items-center justify-center border border-[#c3e5f0] bg-linear-to-b from-white to-[#def1f8] pb-px"><Fit className="w-[51px]">BAR CHART</Fit></div>
        </nav>
        <div className="flex">
          <Sidebar />
          <CityMap />
        </div>
      </div>
      <Report />
    </div>
  );
}
